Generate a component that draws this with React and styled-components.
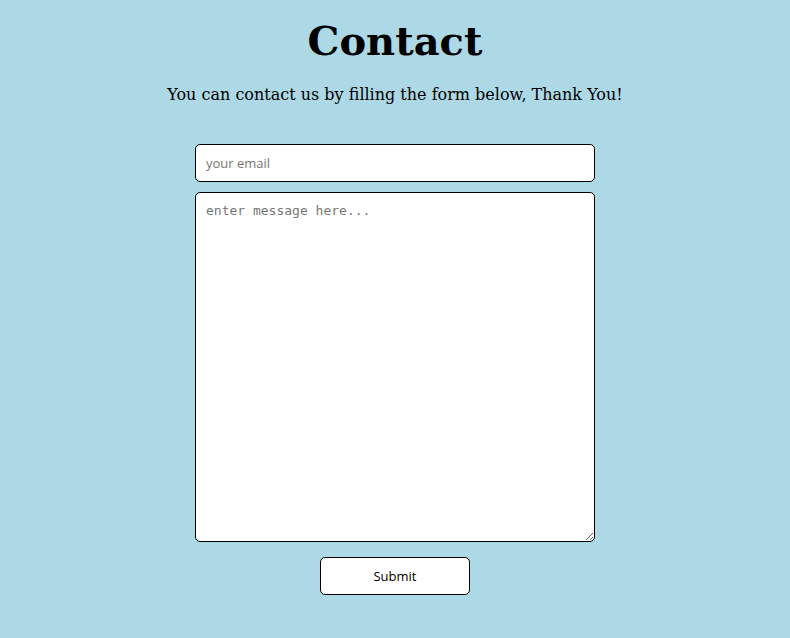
import React from "react";
import styled, { createGlobalStyle } from "styled-components";

const Global = createGlobalStyle`
  html, body { margin: 0; padding: 0; background: #add8e6; }
  body { font-family: "DejaVu Serif", serif; color: #000; }
`;

const Page = styled.main`
  display: flex;
  flex-direction: column;
  align-items: center;
  padding-top: 14px;
`;

const Title = styled.h1`
  margin: 0;
  font-family: "DejaVu Serif", serif;
  font-weight: bold;
  font-size: 40px;
  line-height: 54px;
`;

const Lead = styled.p`
  margin: 16px 0 0;
  font-family: "DejaVu Serif", serif;
  font-size: 16px;
  line-height: 22px;
`;

const Form = styled.form`
  display: flex;
  flex-direction: column;
  align-items: center;
  margin-top: 38px;
  width: 400px;
`;

const Field = styled.input`
  box-sizing: border-box;
  width: 400px;
  height: 38px;
  border: 1px solid #000;
  border-radius: 5px;
  background: #fff;
  padding: 0 10px;
  font-family: "Open Sans", "Noto Sans", sans-serif;
  font-size: 13px;
  outline: none;
  &::placeholder { color: #767676; }
`;

const Area = styled.textarea`
  box-sizing: border-box;
  width: 400px;
  height: 350px;
  margin-top: 10px;
  border: 1px solid #000;
  border-radius: 5px;
  background: #fff;
  padding: 10px;
  font-family: "DejaVu Sans Mono", monospace;
  font-size: 13px;
  outline: none;
  &::placeholder { color: #767676; }
`;

const Button = styled.button`
  box-sizing: border-box;
  width: 150px;
  height: 38px;
  margin-top: 15px;
  border: 1px solid #000;
  border-radius: 5px;
  background: #fff;
  color: #000;
  font-family: "Open Sans", "Noto Sans", sans-serif;
  font-size: 13px;
  cursor: pointer;
`;

export default function App() {
  return (
    <>
      <Global />
      <Page>
        <Title>Contact</Title>
        <Lead>You can contact us by filling the form below, Thank You!</Lead>
        <Form onSubmit={(e) => e.preventDefault()}>
          <Field type="email" placeholder="your email" />
          <Area placeholder="enter message here..." />
          <Button type="submit">Submit</Button>
        </Form>
      </Page>
    </>
  );
}
